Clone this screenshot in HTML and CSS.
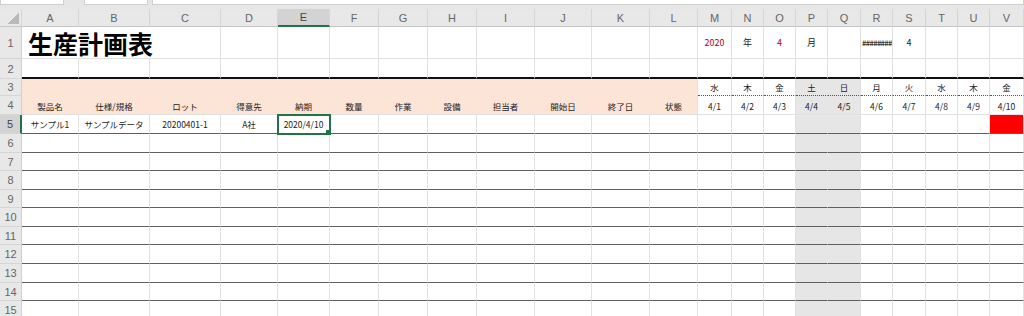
FILE: index.html
```html
<!DOCTYPE html>
<html>

<head>
    <title>生産計画表</title>
    <link rel="stylesheet" href="styles.css">
</head>

<body>
    <div class="toolbar">
        <div class="box name"></div>
        <div class="box fx"></div>
        <div class="box formula"></div>
    </div>

    <table class="sheet">
        <colgroup>
            <col class="w-hdr">
            <col class="w-a"><col class="w-b"><col class="w-c"><col class="w-d"><col class="w-e">
            <col class="w-f"><col class="w-g"><col class="w-h"><col class="w-i"><col class="w-j">
            <col class="w-k"><col class="w-l">
            <col class="w-m"><col class="w-n"><col class="w-o"><col class="w-p"><col class="w-q">
            <col class="w-r"><col class="w-s"><col class="w-t"><col class="w-u"><col class="w-v">
        </colgroup>
        <thead>
            <tr class="cols">
                <th class="corner"></th>
                <th>A</th><th>B</th><th>C</th><th>D</th><th class="sel">E</th><th>F</th>
                <th>G</th><th>H</th><th>I</th><th>J</th><th>K</th><th>L</th>
                <th>M</th><th>N</th><th>O</th><th>P</th><th>Q</th><th>R</th>
                <th>S</th><th>T</th><th>U</th><th>V</th>
            </tr>
        </thead>
        <tbody>
            <tr class="r1">
                <th>1</th>
                <td colspan="3" class="title">生産計画表</td>
                <td></td><td></td><td></td><td></td><td></td><td></td><td></td><td></td><td></td>
                <td class="red">2020</td><td>年</td><td class="red">4</td><td>月</td><td></td>
                <td class="hash">########</td><td>4</td><td></td><td></td><td></td>
            </tr>
            <tr class="r2">
                <th>2</th>
                <td></td><td></td><td></td><td></td><td></td><td></td><td></td><td></td><td></td><td></td><td></td><td></td>
                <td></td><td></td><td></td><td></td><td></td><td></td><td></td><td></td><td></td><td></td>
            </tr>
            <tr class="r3">
                <th>3</th>
                <td class="pk"></td><td class="pk"></td><td class="pk"></td><td class="pk"></td>
                <td class="pk"></td><td class="pk"></td><td class="pk"></td><td class="pk"></td>
                <td class="pk"></td><td class="pk"></td><td class="pk"></td><td class="pk last"></td>
                <td>水</td><td>木</td><td>金</td><td class="we">土</td><td class="we we2">日</td>
                <td>月</td><td>火</td><td>水</td><td>木</td><td>金</td>
            </tr>
            <tr class="r4">
                <th>4</th>
                <td class="pk">製品名</td><td class="pk">仕様/規格</td><td class="pk">ロット</td>
                <td class="pk">得意先</td><td class="pk">納期</td><td class="pk">数量</td>
                <td class="pk">作業</td><td class="pk">設備</td><td class="pk">担当者</td>
                <td class="pk">開始日</td><td class="pk">終了日</td><td class="pk last">状態</td>
                <td>4/1</td><td>4/2</td><td>4/3</td><td class="we">4/4</td><td class="we we2">4/5</td>
                <td>4/6</td><td>4/7</td><td>4/8</td><td>4/9</td><td>4/10</td>
            </tr>
            <tr class="r5 line">
                <th class="sel">5</th>
                <td>サンプル1</td><td>サンプルデータ</td><td>20200401-1</td><td>A社</td>
                <td class="active">2020/4/10</td>
                <td></td><td></td><td></td><td></td><td></td><td></td><td></td>
                <td></td><td></td><td></td><td class="we"></td><td class="we we2"></td>
                <td></td><td></td><td></td><td></td><td class="bar"></td>
            </tr>
            <tr class="rs line">
                <th>6</th>
                <td></td><td></td><td></td><td></td><td></td><td></td><td></td><td></td><td></td><td></td><td></td><td></td>
                <td></td><td></td><td></td><td class="we"></td><td class="we we2"></td><td></td><td></td><td></td><td></td><td></td>
            </tr>
            <tr class="rt line">
                <th>7</th>
                <td></td><td></td><td></td><td></td><td></td><td></td><td></td><td></td><td></td><td></td><td></td><td></td>
                <td></td><td></td><td></td><td class="we"></td><td class="we we2"></td><td></td><td></td><td></td><td></td><td></td>
            </tr>
            <tr class="rs line">
                <th>8</th>
                <td></td><td></td><td></td><td></td><td></td><td></td><td></td><td></td><td></td><td></td><td></td><td></td>
                <td></td><td></td><td></td><td class="we"></td><td class="we we2"></td><td></td><td></td><td></td><td></td><td></td>
            </tr>
            <tr class="rt line">
                <th>9</th>
                <td></td><td></td><td></td><td></td><td></td><td></td><td></td><td></td><td></td><td></td><td></td><td></td>
                <td></td><td></td><td></td><td class="we"></td><td class="we we2"></td><td></td><td></td><td></td><td></td><td></td>
            </tr>
            <tr class="rs line">
                <th>10</th>
                <td></td><td></td><td></td><td></td><td></td><td></td><td></td><td></td><td></td><td></td><td></td><td></td>
                <td></td><td></td><td></td><td class="we"></td><td class="we we2"></td><td></td><td></td><td></td><td></td><td></td>
            </tr>
            <tr class="rt line">
                <th>11</th>
                <td></td><td></td><td></td><td></td><td></td><td></td><td></td><td></td><td></td><td></td><td></td><td></td>
                <td></td><td></td><td></td><td class="we"></td><td class="we we2"></td><td></td><td></td><td></td><td></td><td></td>
            </tr>
            <tr class="rs line">
                <th>12</th>
                <td></td><td></td><td></td><td></td><td></td><td></td><td></td><td></td><td></td><td></td><td></td><td></td>
                <td></td><td></td><td></td><td class="we"></td><td class="we we2"></td><td></td><td></td><td></td><td></td><td></td>
            </tr>
            <tr class="rs line">
                <th>13</th>
                <td></td><td></td><td></td><td></td><td></td><td></td><td></td><td></td><td></td><td></td><td></td><td></td>
                <td></td><td></td><td></td><td class="we"></td><td class="we we2"></td><td></td><td></td><td></td><td></td><td></td>
            </tr>
            <tr class="rt line">
                <th>14</th>
                <td></td><td></td><td></td><td></td><td></td><td></td><td></td><td></td><td></td><td></td><td></td><td></td>
                <td></td><td></td><td></td><td class="we"></td><td class="we we2"></td><td></td><td></td><td></td><td></td><td></td>
            </tr>
            <tr class="rs">
                <th>15</th>
                <td></td><td></td><td></td><td></td><td></td><td></td><td></td><td></td><td></td><td></td><td></td><td></td>
                <td></td><td></td><td></td><td class="we"></td><td class="we we2"></td><td></td><td></td><td></td><td></td><td></td>
            </tr>
        </tbody>
    </table>
</body>

</html>
```

FILE: styles.css
```css
body {
    margin: 0;
    font-family: "Noto Sans CJK JP", "Noto Sans", sans-serif;
    background-color: #fff;
    overflow: hidden;
}

/* strip left over from the formula bar */
.toolbar {
    display: flex;
    gap: 4px;
    height: 9px;
    background-color: #e6e6e6;
}

.box {
    height: 4px;
    background-color: #fff;
    border: 1px solid #d0d0d0;
    border-top: none;
}

.name { width: 62px; }
.fx { width: 62px; margin-left: 16px; }
.formula { flex: 1; }

.sheet {
    width: 1024px;
    table-layout: fixed;
    border-collapse: separate;
    border-spacing: 0;
    font-size: 8.5px;
    color: #222;
}

.w-hdr { width: 22px; }
.w-a { width: 57px; }
.w-b { width: 71px; }
.w-c { width: 71px; }
.w-d { width: 57px; }
.w-e { width: 52px; }
.w-f { width: 49px; }
.w-g { width: 49px; }
.w-h { width: 49px; }
.w-i { width: 58px; }
.w-j { width: 57px; }
.w-k { width: 58px; }
.w-l { width: 48px; }
.w-m { width: 34px; }
.w-n { width: 32px; }
.w-o { width: 32px; }
.w-p { width: 32px; }
.w-q { width: 33px; }
.w-r { width: 32px; }
.w-s { width: 33px; }
.w-t { width: 32px; }
.w-u { width: 32px; }
.w-v { width: 34px; }

td, th {
    padding: 0;
    overflow: hidden;
    white-space: nowrap;
    text-align: center;
    vertical-align: middle;
}

td {
    border-right: 1px solid #e1e1e1;
    border-bottom: 1px solid #e1e1e1;
}

th {
    background-color: #e8e8e8;
    color: #666;
    font-family: "Liberation Sans", Arial, sans-serif;
    font-weight: normal;
    font-size: 11px;
    border-right: 1px solid #cfcfcf;
    border-bottom: 1px solid #d6d6d6;
}

.cols { height: 18px; }
.cols th { border-right-color: #d6d6d6; border-bottom-color: #c6c6c6; }

.corner {
    background-image: linear-gradient(135deg, transparent 50%, #b9b9b9 50%);
    background-size: 11px 11px;
    background-position: right 2px bottom 2px;
    background-repeat: no-repeat;
}

th.sel {
    background-color: #d3d3d3;
    color: #444;
}

.cols th.sel { border-bottom: 2px solid #217346; }
tbody th.sel { border-right: 2px solid #217346; }

.r1 { height: 31px; }
.r2 { height: 20px; }
.r3 { height: 17px; }
.r4 { height: 19px; }
.r5 { height: 19px; }
.rs { height: 19px; }
.rt { height: 18px; }

.r1 td { font-size: 9px; }

.r1 .title {
    text-align: left;
    padding-left: 6px;
    padding-top: 2px;
    font-size: 25px;
    font-weight: bold;
    color: #000;
    line-height: 29px;
    overflow: visible;
}

.red { color: #c00000; }
.r1 .hash {
    font-size: 7.5px;
    letter-spacing: -0.7px;
    font-weight: bold;
    color: #333;
    text-align: left;
    padding-left: 1px;
}

.r2 td { border-bottom: 2px solid #111; }

.r3 td { border-bottom: 1px dotted #555; }
.r4 td { vertical-align: bottom; padding-bottom: 2px; }

.pk {
    background-color: #fce4d6;
    border-right-color: #fce4d6;
}
.r3 .pk { border-bottom: 1px solid #fce4d6; }
.pk.last { border-right-color: #e1e1e1; }

.we {
    background-color: #e7e6e6;
    border-right-color: #e7e6e6;
}
.we2 { border-right-color: #e1e1e1; }

.line td { border-bottom: 1px solid #5f5f5f; }

.active {
    position: relative;
    outline: 2px solid #217346;
    outline-offset: -1px;
}

.active::after {
    content: "";
    position: absolute;
    right: -2px;
    bottom: -2px;
    width: 4px;
    height: 4px;
    background-color: #217346;
    border: 1px solid #fff;
}

.bar { background-color: #ff0000; }
```
